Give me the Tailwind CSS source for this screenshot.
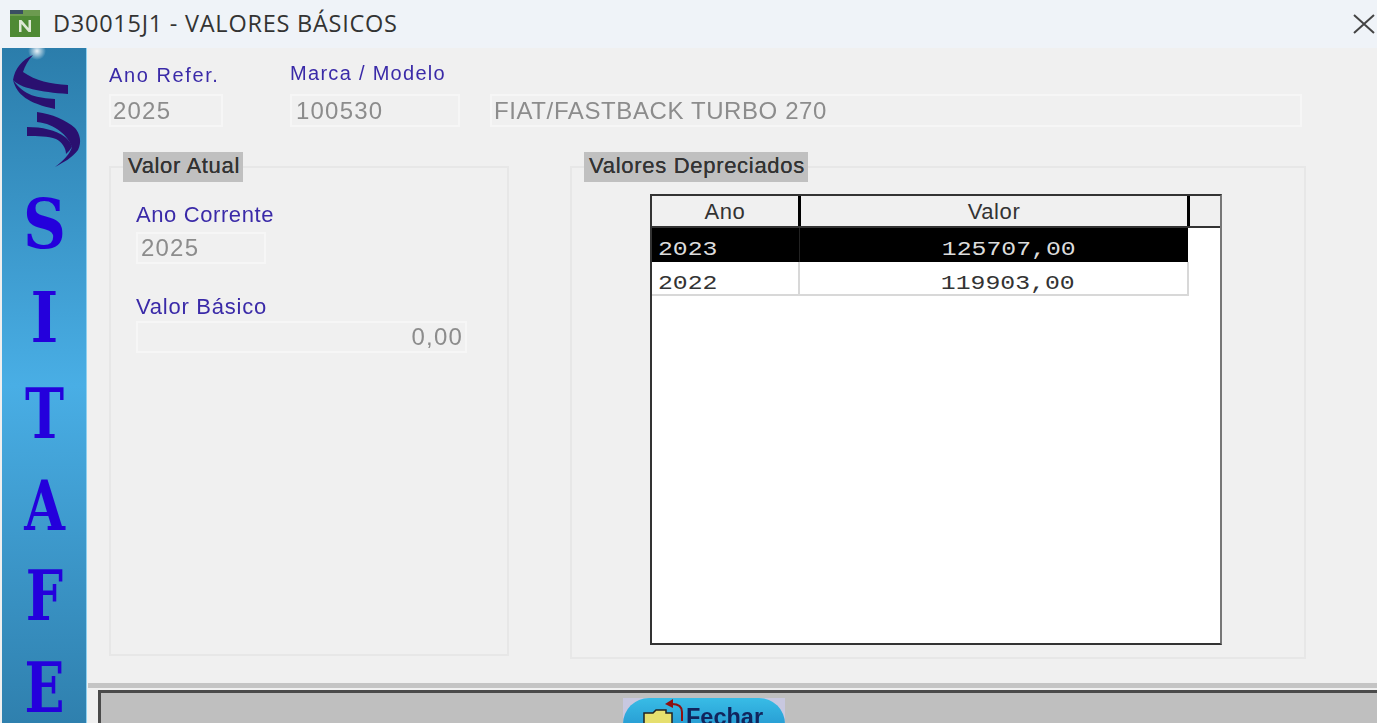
<!DOCTYPE html>
<html lang="en">
<head>
    <meta charset="UTF-8">
    <meta name="viewport" content="width=device-width, initial-scale=1.0">
    <title>D30015J1 - VALORES BÁSICOS</title>
    <script src="https://cdn.jsdelivr.net/npm/@tailwindcss/browser@4"></script>
</head>
<body class="bg-[#f0f0f0]">
<div class="w-[1377px] h-[723px] overflow-hidden flex flex-col font-['Liberation_Sans',sans-serif] blur-[0.6px]">

    <!-- Title bar -->
    <header class="h-[48px] shrink-0 flex items-center bg-[#eff3f8] pl-[10px] pr-[2px] pb-[1px]">
        <svg class="w-[30px] h-[27px] shrink-0" viewBox="0 0 30 27">
            <rect width="30" height="27" fill="#4f8a35"/>
            <rect width="30" height="6" fill="#6c9a50"/>
            <rect width="13" height="4" fill="#3a4f62"/>
            <path d="M9 22V10h2.500l7 8v-8H21v12h-2.500l-7-8v8z" fill="#dfe9d6"/>
        </svg>
        <span class="ml-[13px] font-['Open_Sans',sans-serif] text-[23.5px] tracking-[0.75px] text-[#333]">D30015J1 - VALORES BÁSICOS</span>
        <svg class="ml-auto w-[22px] h-[20px]" viewBox="0 0 22 20" fill="none" stroke="#444" stroke-width="2">
            <path d="M1 1l20 18M21 1L1 19"/>
        </svg>
    </header>

    <div class="flex-1 min-h-0 flex">
        <!-- Side banner -->
        <aside class="ml-[2px] w-[85px] shrink-0 overflow-hidden border-r border-[#8fd0ef] bg-linear-to-b from-[#2b7dab] via-[#49aee5] to-[#2f80ae] flex flex-col">
            <svg class="w-[84px] h-[122px] shrink-0" viewBox="2 48 84 122">
                <defs>
                    <radialGradient id="glow">
                        <stop offset="0" stop-color="#fff" stop-opacity=".9"/>
                        <stop offset="1" stop-color="#fff" stop-opacity="0"/>
                    </radialGradient>
                </defs>
                <circle cx="37" cy="51" r="9" fill="url(#glow)"/>
                <g fill="#2a1070">
                    <path d="M33 55C22 60 15 68 13 80C20 88 40 92 68 94V85C50 84 36 81 23 72C25 66 28 60 33 55Z"/>
                    <path d="M13 80C17 95 28 103 55 109V99C38 98 24 96 13 80Z"/>
                    <path d="M37 112C52 114 66 120 75 128C80 134 82 142 78 150C72 158 64 162 55 167C64 160 70 154 72 147C68 136 56 124 37 122Z"/>
                    <path d="M27 127C42 127 56 130 65 137C70 141 72 145 72 147C70 150 68 152 66 154C66 148 62 142 56 139C48 136 38 136 27 136Z"/>
                </g>
            </svg>
            <div class="pt-[7px] pl-[1px] flex flex-col text-center font-['DejaVu_Serif',serif] font-bold text-[70px] leading-[93px] text-[#2400dc]">
                <span class="block h-[94px] scale-x-85">S</span>
                <span class="block h-[96px] scale-x-85">I</span>
                <span class="block h-[92px] scale-x-75">T</span>
                <span class="block h-[90px] scale-x-75">A</span>
                <span class="block h-[92px] scale-x-75">F</span>
                <span class="block h-[93px] scale-x-75">E</span>
            </div>
        </aside>

        <main class="flex-1 min-w-0 flex flex-col">
            <div class="h-[635px] shrink-0 pl-[22px]">
                <!-- Header fields -->
                <div class="flex items-start">
                    <div class="w-[114px] mr-[67px]">
                        <div class="mt-[16px] mb-[8px] text-[20px] leading-[22px] tracking-[1.6px] text-[#3a2aa8]">Ano Refer.</div>
                        <div class="h-[33px] border-2 border-[#f6f6f6] pl-[2px] text-[24px] leading-[29px] tracking-[1.2px] text-[#8c8c8c]">2025</div>
                    </div>
                    <div class="w-[170px] mr-[30px]">
                        <div class="mt-[14px] mb-[10px] text-[20px] leading-[22px] tracking-[1.3px] whitespace-nowrap text-[#3a2aa8]">Marca / Modelo</div>
                        <div class="h-[33px] border-2 border-[#f6f6f6] pl-[4px] text-[24px] leading-[29px] tracking-[1.2px] text-[#8c8c8c]">100530</div>
                    </div>
                    <div class="w-[812px] mt-[46px] h-[33px] border-2 border-[#f6f6f6] pl-[2px] text-[24px] leading-[29px] tracking-[0.6px] text-[#8c8c8c]">FIAT/FASTBACK TURBO 270</div>
                </div>

                <div class="mt-[39px] flex items-start">
                    <!-- Valor Atual -->
                    <section class="relative w-[400px] h-[490px] border-2 border-[#e7e7e7] pl-[25px] pt-[36px]">
                        <div class="absolute left-[12px] top-[-16px] w-[120px] h-[30px] bg-[#c0c0c0] pl-[5px] text-[22px] tracking-[0.65px] leading-[28px] text-[#333] [text-shadow:0_0_0.6px_#333]">Valor Atual</div>
                        <div class="text-[22px] leading-[22px] tracking-[0.6px] text-[#3a2aa8]">Ano Corrente</div>
                        <div class="mt-[6px] w-[130px] h-[32px] border-2 border-[#f6f6f6] pl-[3px] text-[24px] leading-[28px] tracking-[1.2px] text-[#8c8c8c]">2025</div>
                        <div class="mt-[32px] text-[22px] leading-[22px] tracking-[0.75px] text-[#3a2aa8]">Valor Básico</div>
                        <div class="mt-[3px] w-[331px] h-[32px] border-2 border-[#f6f6f6] pr-[2px] text-right text-[24px] leading-[28px] tracking-[1.2px] text-[#8c8c8c]">0,00</div>
                    </section>

                    <!-- Valores Depreciados -->
                    <section class="relative ml-[61px] w-[736px] h-[493px] border-2 border-[#e7e7e7] pl-[78px] pt-[26px]">
                        <div class="absolute left-[12px] top-[-16px] w-[224px] h-[30px] bg-[#c0c0c0] pl-[5px] text-[22px] tracking-[0.7px] leading-[28px] whitespace-nowrap text-[#333] [text-shadow:0_0_0.6px_#333]">Valores Depreciados</div>
                        <div class="w-[572px] h-[451px] bg-white border-y-2 border-l-2 border-t-[#333] border-b-[#333] border-l-[#333] border-r-2 border-r-[#777] font-['Liberation_Mono',monospace] text-[21px]">
                            <div class="h-[32px] flex border-b-2 border-[#333] bg-[#f0f0f0] font-['Liberation_Sans',sans-serif] text-[22px] tracking-[0.6px] leading-[31px] text-center text-[#333]">
                                <div class="w-[149px] border-r-[3px] border-black">Ano</div>
                                <div class="w-[389px] border-r-[3px] border-black">Valor</div>
                                <div class="flex-1"></div>
                            </div>
                            <div class="w-[536px] h-[34px] flex bg-black text-[#dcdcdc] leading-[44px]">
                                <div class="w-[148px] border-r border-[#222] pl-[6px]"><span class="inline-block origin-left scale-x-118">2023</span></div>
                                <div class="flex-1 pl-[29px] text-center"><span class="inline-block scale-x-118">125707,00</span></div>
                            </div>
                            <div class="w-[537px] h-[34px] flex border-r-2 border-b-2 border-[#d8d8d8] text-[#333] leading-[44px]">
                                <div class="w-[148px] border-r-2 border-[#d8d8d8] pl-[6px]"><span class="inline-block origin-left scale-x-118">2022</span></div>
                                <div class="flex-1 pl-[29px] text-center"><span class="inline-block scale-x-118">119903,00</span></div>
                            </div>
                        </div>
                    </section>
                </div>
            </div>

            <!-- Bottom toolbar -->
            <div class="flex-1 min-h-0 ml-[1px] border-t-[5px] border-t-[#c4c4c4] pt-[2px] pl-[10px]">
                <div class="h-full bg-[#bfbfbf] border-t-[3px] border-l-[3px] border-[#4a4a4a] pt-[5px] pl-[522px]">
                    <div class="w-[162px] h-[50px] bg-[#c8c8e0]">
                        <div class="relative w-full h-full rounded-t-[26px] bg-linear-to-b from-[#38bce6] to-[#1c84c4] pl-[63px] pt-[7px] font-bold text-[23.5px] leading-[24px] text-[#11245c]">
                            Fechar
                            <svg class="absolute left-[18px] top-0 w-[44px] h-[30px]" viewBox="0 0 44 30">
                                <path d="M3 15h9l3-3h10v3h6v15H3z" fill="#e6df6e" stroke="#222" stroke-width="1.500"/>
                                <path d="M41 23V14C41 8 36 6 31 6" fill="none" stroke="#8f1010" stroke-width="2"/>
                                <path d="M24 6l8-5v9z" fill="#8f1010"/>
                            </svg>
                        </div>
                    </div>
                </div>
            </div>
        </main>
    </div>
</div>
</body>
</html>
